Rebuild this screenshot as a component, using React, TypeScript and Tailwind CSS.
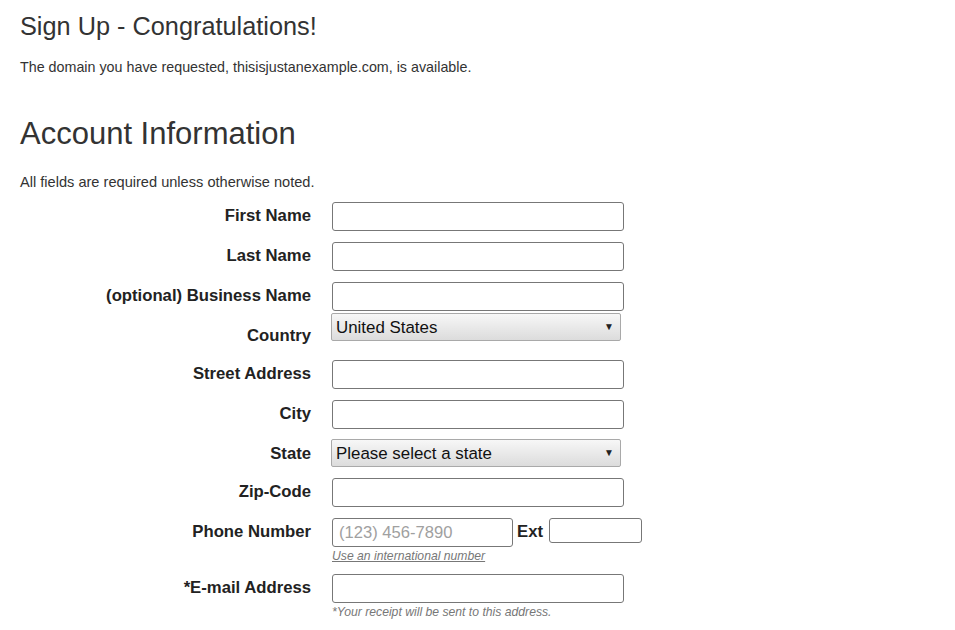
import React from "react";

const font = { fontFamily: '"Liberation Sans", Arial, sans-serif' };

function Label({ children, pt = "pt-[4px]" }: { children: React.ReactNode; pt?: string }) {
  return (
    <div className={`w-[291px] shrink-0 text-right text-[16.7px] font-bold leading-[20px] text-[#222] ${pt}`}>
      {children}
    </div>
  );
}

function TextInput({ className = "w-[292px]", placeholder }: { className?: string; placeholder?: string }) {
  return (
    <input
      type="text"
      placeholder={placeholder}
      className={`h-[29px] rounded-[3px] border border-[#777] bg-white px-[6px] text-[16.6px] text-[#333] placeholder:text-[#a0a0a0] focus:outline-none ${className}`}
    />
  );
}

function FakeSelect({ value }: { value: string }) {
  return (
    <div className="-ml-[1px] flex h-[28px] w-[290px] items-center justify-between rounded-[2px] border border-[#a9a9a9] bg-gradient-to-b from-[#f7f7f7] to-[#dcdcdc] pl-[4px] pr-[6px] pt-[2px] text-[16.9px] text-[#111]">
      <span>{value}</span>
      <span className="-mt-[3px] text-[10px] leading-none text-[#222]">▼</span>
    </div>
  );
}

function Row({ label, h, pt, children }: { label: string; h: string; pt?: string; children: React.ReactNode }) {
  return (
    <div className={`flex items-start ${h}`}>
      <Label pt={pt}>{label}</Label>
      <div className="ml-[21px] flex flex-col">{children}</div>
    </div>
  );
}

export default function App() {
  return (
    <div className="min-h-screen bg-white pl-[20px] text-[#333]" style={font}>
      <h3 className="pt-[11px] text-[25.3px] leading-[30px] font-normal">Sign Up - Congratulations!</h3>
      <p className="mt-[16px] text-[14.3px] leading-[20px]">
        The domain you have requested, thisisjustanexample.com, is available.
      </p>

      <h2 className="mt-[39px] text-[31px] leading-[36px] font-normal">Account Information</h2>
      <p className="mt-[20px] text-[14.6px] leading-[20px]">All fields are required unless otherwise noted.</p>

      <form className="mt-[10px] flex flex-col">
        <Row label="First Name" h="h-[40px]">
          <TextInput />
        </Row>
        <Row label="Last Name" h="h-[40px]">
          <TextInput />
        </Row>
        <Row label="(optional) Business Name" h="h-[31px]">
          <TextInput />
        </Row>
        <Row label="Country" h="h-[47px]" pt="pt-[13px]">
          <FakeSelect value="United States" />
        </Row>
        <Row label="Street Address" h="h-[40px]">
          <TextInput />
        </Row>
        <Row label="City" h="h-[39px]">
          <TextInput />
        </Row>
        <Row label="State" h="h-[39px]" pt="pt-[5px]">
          <FakeSelect value="Please select a state" />
        </Row>
        <Row label="Zip-Code" h="h-[40px]">
          <TextInput />
        </Row>
        <Row label="Phone Number" h="h-[56px]">
          <div className="flex items-start">
            <TextInput className="w-[181px]" placeholder="(123) 456-7890" />
            <span className="ml-[4px] pt-[4px] text-[16.7px] font-bold leading-[20px] text-[#222]">Ext</span>
            <input
              type="text"
              className="ml-[6px] h-[25px] w-[93px] rounded-[3px] border border-[#777] bg-white focus:outline-none"
            />
          </div>
          <a href="#" className="mt-[2px] text-[12.2px] italic leading-[14px] text-[#777] underline">
            Use an international number
          </a>
        </Row>
        <Row label="*E-mail Address" h="h-[56px]">
          <TextInput />
          <span className="mt-[2px] text-[12.2px] italic leading-[14px] text-[#777]">
            *Your receipt will be sent to this address.
          </span>
        </Row>
      </form>
    </div>
  );
}
